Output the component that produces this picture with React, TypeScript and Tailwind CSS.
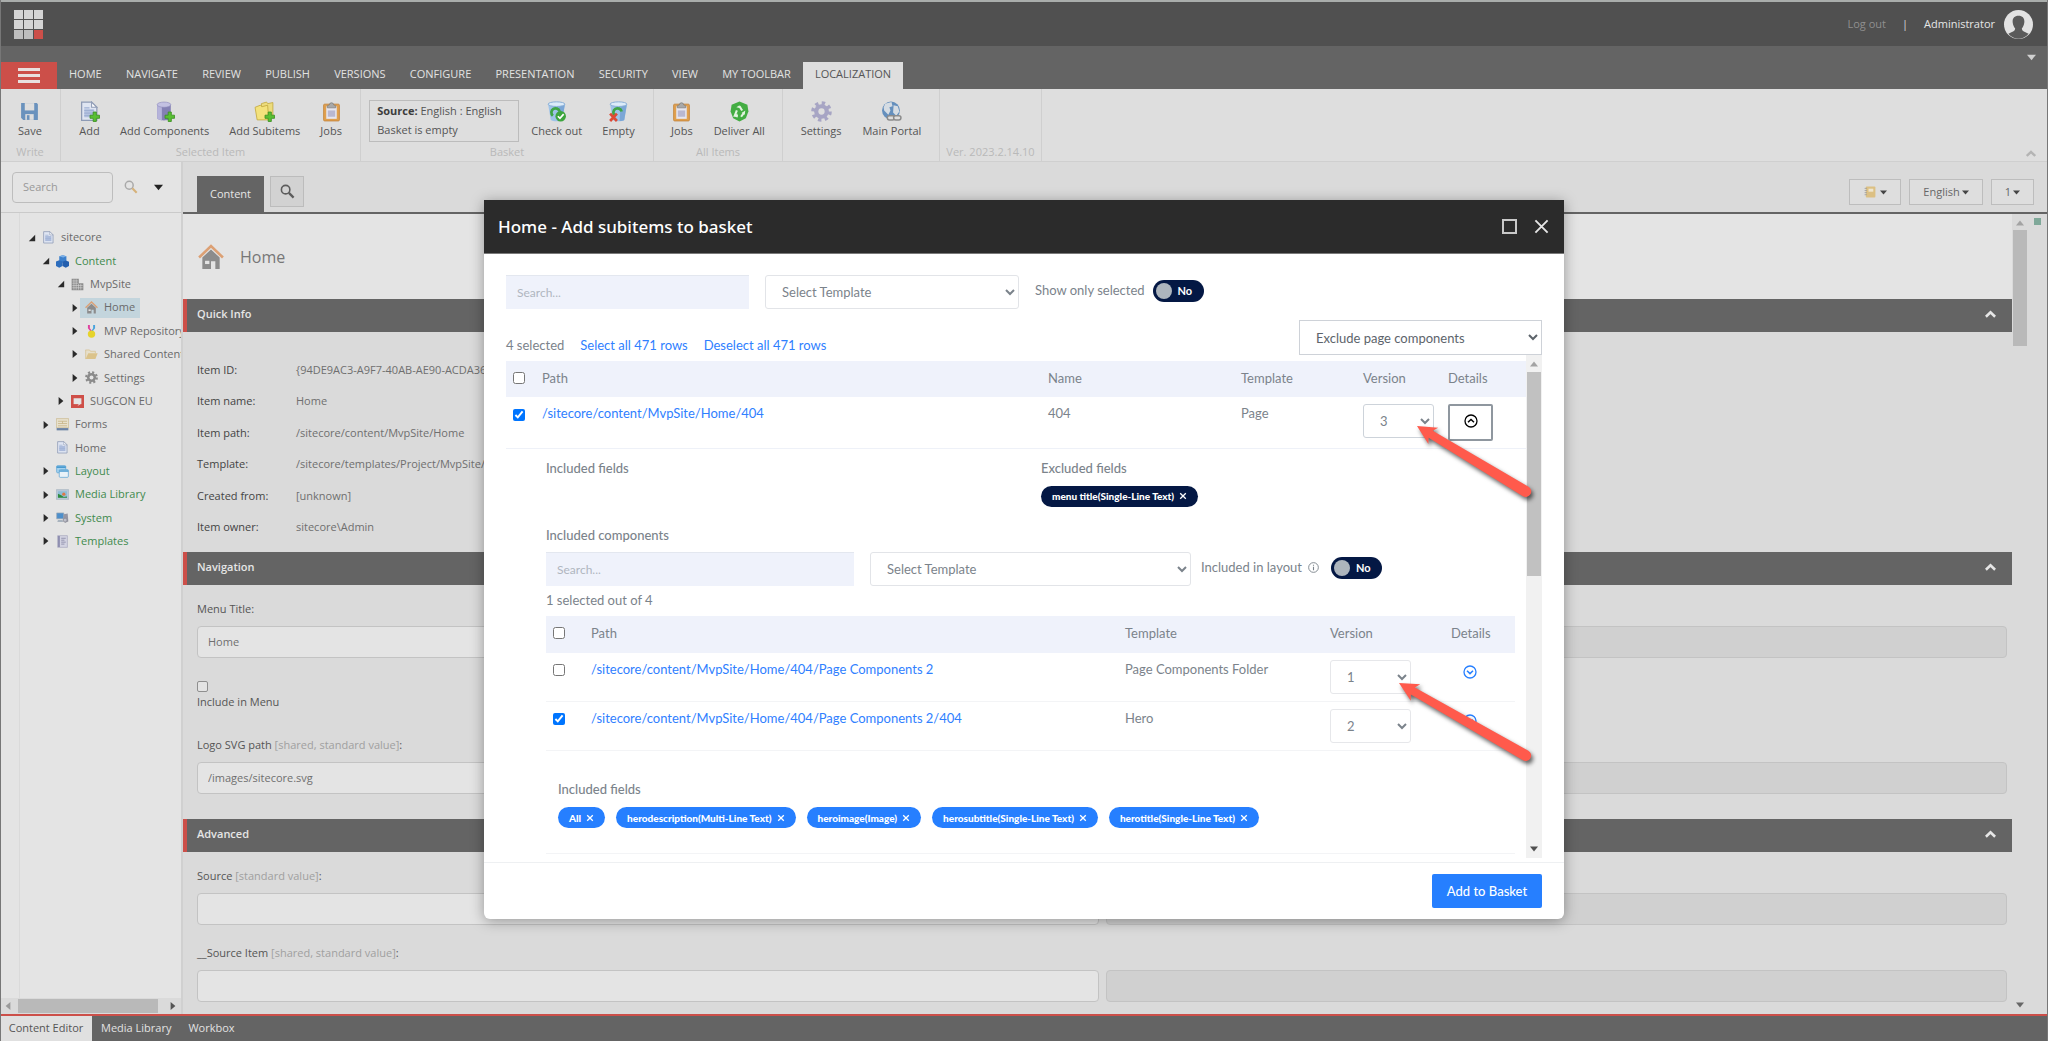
import React, { useState } from 'react';
import { clsx } from 'clsx';

type IconProps = { className?: string };

/* ---------- icons ---------- */

const Plus = () => (
  <path d="M13.5 10.5h3v3h3v3h-3v3h-3v-3h-3v-3h3z" fill="#58c032" stroke="#3c8f22" strokeWidth="0.8" />
);

const SaveIcon = ({ className }: IconProps) => (
  <svg viewBox="0 0 20 20" className={className}>
    <path d="M2 2h15l1 1v15H4l-2-2z" fill="#6a92bd" />
    <path d="M5.5 2h9v7h-9z" fill="#dedede" />
    <path d="M6 12.5h8V18H6z" fill="#dedede" />
    <path d="M7.5 13.5h2.5V18H7.5z" fill="#6a92bd" />
  </svg>
);

const DocIcon = ({ className, plus }: IconProps & { plus?: boolean }) => (
  <svg viewBox="0 0 20 20" className={className}>
    <path d="M2.5 1h9.5l5 5v12.5H2.5z" fill="#dfe5f2" stroke="#8e9bb5" strokeWidth="1.2" />
    <path d="M12 1v5h5z" fill="#fff" stroke="#8e9bb5" />
    <path d="M5 8h9.5v7.5H5z" fill="#b4c2e0" />
    <path d="M5 6.5h5M5 9h9M5 11.5h9M5 14h9" stroke="#9fb0d3" strokeWidth="1.2" />
    {plus && <Plus />}
  </svg>
);

const DatabaseIcon = ({ className }: IconProps) => (
  <svg viewBox="0 0 20 20" className={className}>
    <path d="M3 3.5v12.5c0 3.3 13 3.3 13 0V3.5z" fill="#8481b4" />
    <path d="M3 3.5v12.5c0 1.3 2 2.2 4.5 2.4V5z" fill="#b5b3da" />
    <ellipse cx="9.5" cy="3.5" rx="6.5" ry="2.5" fill="#c3c1e2" stroke="#8f8cbc" strokeWidth="0.6" />
    <Plus />
  </svg>
);

const FoldersIcon = ({ className }: IconProps) => (
  <svg viewBox="0 0 20 20" className={className}>
    <path d="M7 2.5l5-1.5 1 1.5 5-1v13H8z" fill="#ecdc7c" stroke="#c3a93f" strokeWidth="0.8" />
    <path d="M1 6l5-2 1.5 1.5L13 4l1 14H3z" fill="#f3e27c" stroke="#c3a93f" strokeWidth="0.8" />
    <Plus />
  </svg>
);

const ClipboardIcon = ({ className }: IconProps) => (
  <svg viewBox="0 0 20 20" className={className}>
    <rect x="2.5" y="3" width="15" height="16" rx="1" fill="#e0a04f" stroke="#c4833a" strokeWidth="0.8" />
    <path d="M5 5h10v12H5z" fill="#e6e6f0" />
    <path d="M6.5 9h7v6h-7z" fill="#b9b8d2" />
    <path d="M6 6.5V4.5l2-.8a2 2 0 0 1 4 0l2 .8v2z" fill="#a9a9a9" stroke="#7f7f7f" strokeWidth="0.7" />
  </svg>
);

const BinIcon = ({ className, mark }: IconProps & { mark: 'check' | 'cross' }) => (
  <svg viewBox="0 0 20 20" className={className}>
    <path d="M2 3l2.5 15c2 1.6 9 1.6 11 0L18 3z" fill="#9fc3e8" />
    <path d="M12 4l-1 15c2 0 4-.5 4.5-1L18 3z" fill="#7ba6d6" />
    <ellipse cx="10" cy="3" rx="8" ry="2.2" fill="#dcebf8" stroke="#86acd4" strokeWidth="0.9" />
    <path d="M6.5 14a4 4 0 1 1 6.5-4" fill="none" stroke="#3fa546" strokeWidth="2.6" />
    {mark === 'check' ? (
      <>
        <circle cx="14" cy="14.5" r="5" fill="#3da53d" />
        <path d="M11.3 14.5l2 2 3.5-4" fill="none" stroke="#fff" strokeWidth="1.6" />
      </>
    ) : (
      <path d="M2 12l6.5 7M8.5 12L2 19" stroke="#dd4a35" strokeWidth="2.6" />
    )}
  </svg>
);

const RecycleIcon = ({ className }: IconProps) => (
  <svg viewBox="0 0 20 20" className={className}>
    <path d="M10 .5l7.5 3 1 6.5-2.5 6.5-6 3-6-3L1.5 10l1-6.5z" fill="#43ad42" />
    <path d="M10 5l2.5 4M14 11.5L11.5 15M8.5 14h-3l2-5" fill="none" stroke="#e2f3df" strokeWidth="2" />
    <path d="M7 6l3-2 1 3zM15.5 9l-.5 4-3-1.5zM8 12v4l-3-2z" fill="#e2f3df" />
  </svg>
);

const GearIcon = ({ className, color, hole }: IconProps & { color: string; hole: string }) => (
  <svg viewBox="0 0 20 20" className={className}>
    <circle cx="10" cy="10" r="8" fill="none" stroke={color} strokeWidth="3.6" strokeDasharray="3.14 3.14" />
    <circle cx="10" cy="10" r="7" fill={color} />
    <circle cx="10" cy="10" r="3" fill={hole} />
  </svg>
);

const GlobeIcon = ({ className }: IconProps) => (
  <svg viewBox="0 0 20 20" className={className}>
    <circle cx="9.5" cy="9" r="8.5" fill="#648fbd" />
    <path d="M4 2.5l6-1.5 1 4-3 1 1 3-2 4-4-4-.5-3zM12 4l4 1 1.5 5-3 4-3-3z" fill="#d5dce3" />
    <rect x="6" y="14" width="7" height="4" rx="2" fill="#dedede" stroke="#8b8b8b" strokeWidth="1.4" />
    <rect x="12" y="14" width="7" height="4" rx="2" fill="#dedede" stroke="#8b8b8b" strokeWidth="1.4" />
  </svg>
);

const HouseIcon = ({ className }: IconProps) => (
  <svg viewBox="0 0 24 24" className={className}>
    <path d="M4 12.5L12 5l8 7.5V23h-4v-7h-4v7H4z" fill="#8c8c8c" />
    <path d="M6.5 15.5h4v3h-4z" fill="#e4e4e4" />
    <path d="M1 12.5L12 1.8l11 10.7" fill="none" stroke="#dca074" strokeWidth="2.4" />
  </svg>
);

const CubesIcon = ({ className }: IconProps) => (
  <svg viewBox="0 0 20 20" className={className}>
    <path d="M5 2l5.5-1.500L16 2v8l-5.500 2L5 10z" fill="#3d80cc" />
    <path d="M0 10l5-2 5 2v7l-5 2.500L0 17z" fill="#2c6dbd" />
    <path d="M10 10.500l5-2 5 2V17l-5 2.500-5-2.500z" fill="#245fae" />
    <path d="M5 2l5.500-1.500L16 2l-5 2z" fill="#7db1e8" />
  </svg>
);

const BuildingIcon = ({ className }: IconProps) => (
  <svg viewBox="0 0 20 20" className={className}>
    <path d="M1 1h11v7h7v11H1z" fill="#8b8b8b" />
    <path d="M2 4.5h9M2 8h9M2 11.5h16M2 15h16M4.5 2v16M8 2v16M11.5 9v9M15 9v9" stroke="#d9d9d9" strokeWidth="0.9" />
  </svg>
);

const MedalIcon = ({ className }: IconProps) => (
  <svg viewBox="0 0 20 20" className={className}>
    <path d="M4.5 0h3v5l3 4-2 1-4-5z" fill="#e0409f" />
    <path d="M12.5 0h3v5l-4 5-1.5-1 2.5-4z" fill="#4aa3dc" />
    <circle cx="10" cy="14" r="5.7" fill="#e6d32c" />
  </svg>
);

const FolderOpenIcon = ({ className }: IconProps) => (
  <svg viewBox="0 0 20 20" className={className}>
    <path d="M1 17V3h6l1.5 2H16v3" fill="#e6dfcb" stroke="#d3bd86" />
    <path d="M1 17L5 8h14.5L16 17z" fill="#dbc38b" />
  </svg>
);

const SlideIcon = ({ className }: IconProps) => (
  <svg viewBox="0 0 20 20" className={className}>
    <path d="M0 0h20v20H0z" fill="#cf4f48" />
    <rect x="4" y="5" width="12" height="9" fill="#e4e4e4" />
    <path d="M10 17l5-3h-3z" fill="#e4e4e4" />
  </svg>
);

const FormsIcon = ({ className }: IconProps) => (
  <svg viewBox="0 0 20 20" className={className}>
    <path d="M.5 1h19v14H.5z" fill="#e8e2cf" stroke="#c6b384" />
    <path d="M3 5h14M3 8.5h14M3 12h14M10 5v3.5" stroke="#c6b384" strokeWidth="1.2" />
    <path d="M1 15.5h18V19H1z" fill="#6c83a4" />
  </svg>
);

const WindowsIcon = ({ className }: IconProps) => (
  <svg viewBox="0 0 20 20" className={className}>
    <rect x="1" y="1" width="14" height="11" rx="1.5" fill="#a6d2ef" stroke="#4a9bd0" />
    <rect x="5" y="7" width="14" height="12" rx="1.5" fill="#e9f2f8" stroke="#4a9bd0" />
    <path d="M1 2h14v2.5H1zM5 8h14v2.5H5z" fill="#4a9bd0" />
  </svg>
);

const ImageIcon = ({ className }: IconProps) => (
  <svg viewBox="0 0 20 20" className={className}>
    <path d="M.5 2.5h19v15H.5z" fill="#b9c9da" stroke="#a6b1bd" />
    <path d="M3 5h14v10H3z" fill="#8fbdd6" />
    <path d="M3 15V9l5 2 4 3 5-1v2z" fill="#2f8b3e" />
    <circle cx="12" cy="9.5" r="2.5" fill="#de7847" />
  </svg>
);

const SystemIcon = ({ className }: IconProps) => (
  <svg viewBox="0 0 20 20" className={className}>
    <path d="M1 3h11v9H1z" fill="#4d8fcb" stroke="#9fa9b4" />
    <path d="M3 14h7l1 3H2z" fill="#a8b3be" />
    <path d="M12 5l6-1 1 12-5 2-3-3z" fill="#9696a3" />
    <circle cx="14" cy="14" r="3" fill="#bfc0cb" stroke="#85868f" />
  </svg>
);

const TemplateIcon = ({ className }: IconProps) => (
  <svg viewBox="0 0 20 20" className={className}>
    <path d="M2.5 1h15v18h-15z" fill="#d3d3e2" stroke="#a3a3bb" />
    <path d="M3 1.5h3v17H3z" fill="#8e8eb0" />
    <path d="M8 5h7M8 8h5M8 11h7M8 14h5" stroke="#8a8aa6" strokeWidth="1.3" />
  </svg>
);

const NotebookIcon = ({ className }: IconProps) => (
  <svg viewBox="0 0 20 20" className={className}>
    <rect x="3" y="1" width="16" height="18" rx="1.5" fill="#dcc083" />
    <path d="M7.5 4.5h8v5h-8z" fill="#efe6cf" />
    <path d="M1 4h4M1 7.5h4M1 11h4M1 14.5h4" stroke="#9c9c9c" strokeWidth="1.3" />
  </svg>
);

const LensIcon = ({ className, stroke, handle }: IconProps & { stroke: string; handle: string }) => (
  <svg viewBox="0 0 16 16" className={className} fill="none">
    <circle cx="6" cy="6" r="4.5" stroke={stroke} strokeWidth="1.7" />
    <path d="M9.5 9.5l5 5" stroke={handle} strokeWidth="2.4" />
  </svg>
);

const Triangle = ({ className, dir }: IconProps & { dir: 'up' | 'down' | 'left' | 'right' | 'corner' }) => {
  const paths = {
    up: 'M0 8h10L5 2z',
    down: 'M0 2h10L5 8z',
    left: 'M8 0v10L2 5z',
    right: 'M2 0v10l6-5z',
    corner: 'M9 1v8H1z',
  };
  return (
    <svg viewBox="0 0 10 10" className={className} fill="currentColor">
      <path d={paths[dir]} />
    </svg>
  );
};

const ChevronUp = ({ className }: IconProps) => (
  <svg viewBox="0 0 10 10" className={className} fill="none" stroke="currentColor" strokeWidth="2.4">
    <path d="M.8 7L5 3l4.2 4" />
  </svg>
);

const CircleChevron = ({ className, up }: IconProps & { up?: boolean }) => (
  <svg viewBox="0 0 14 14" className={className} fill="none" stroke="currentColor" strokeWidth="1.3">
    <circle cx="7" cy="7" r="6" />
    <path d={up ? 'M4 8.3l3-2.8 3 2.8' : 'M4 5.8l3 2.8 3-2.8'} strokeWidth="1.5" />
  </svg>
);

/* ---------- data ---------- */

const tabs = ['HOME', 'NAVIGATE', 'REVIEW', 'PUBLISH', 'VERSIONS', 'CONFIGURE', 'PRESENTATION', 'SECURITY', 'VIEW', 'MY TOOLBAR'];

const treeIcon = 'size-[13px] shrink-0';

const tree = [
  { label: 'sitecore', pad: 'pl-2', arrow: 'open', icon: <DocIcon className={treeIcon} /> },
  { label: 'Content', pad: 'pl-[22px]', arrow: 'open', green: true, icon: <CubesIcon className={treeIcon} /> },
  { label: 'MvpSite', pad: 'pl-[37px]', arrow: 'open', icon: <BuildingIcon className={treeIcon} /> },
  { label: 'Home', pad: 'pl-[51px]', arrow: 'closed', active: true, icon: <HouseIcon className={treeIcon} /> },
  { label: 'MVP Repository', pad: 'pl-[51px]', arrow: 'closed', icon: <MedalIcon className={treeIcon} /> },
  { label: 'Shared Content', pad: 'pl-[51px]', arrow: 'closed', icon: <FolderOpenIcon className={treeIcon} /> },
  { label: 'Settings', pad: 'pl-[51px]', arrow: 'closed', icon: <GearIcon className={treeIcon} color="#8a8a8a" hole="#e4e4e4" /> },
  { label: 'SUGCON EU', pad: 'pl-[37px]', arrow: 'closed', icon: <SlideIcon className={treeIcon} /> },
  { label: 'Forms', pad: 'pl-[22px]', arrow: 'closed', icon: <FormsIcon className={treeIcon} /> },
  { label: 'Home', pad: 'pl-[22px]', icon: <DocIcon className={treeIcon} /> },
  { label: 'Layout', pad: 'pl-[22px]', arrow: 'closed', green: true, icon: <WindowsIcon className={treeIcon} /> },
  { label: 'Media Library', pad: 'pl-[22px]', arrow: 'closed', green: true, icon: <ImageIcon className={treeIcon} /> },
  { label: 'System', pad: 'pl-[22px]', arrow: 'closed', green: true, icon: <SystemIcon className={treeIcon} /> },
  { label: 'Templates', pad: 'pl-[22px]', arrow: 'closed', green: true, icon: <TemplateIcon className={treeIcon} /> },
];

const quickInfo = [
  ['Item ID:', '{94DE9AC3-A9F7-40AB-AE90-ACDA364D0A2C}'],
  ['Item name:', 'Home'],
  ['Item path:', '/sitecore/content/MvpSite/Home'],
  ['Template:', '/sitecore/templates/Project/MvpSite/Home'],
  ['Created from:', '[unknown]'],
  ['Item owner:', 'sitecore\\Admin'],
];

const heroFields = ['All', 'herodescription(Multi-Line Text)', 'heroimage(Image)', 'herosubtitle(Single-Line Text)', 'herotitle(Single-Line Text)'];

/* ---------- editor shell ---------- */

const TopBar = () => (
  <header className="flex h-[46px] shrink-0 items-center border-t-2 border-[#a9adab] bg-[#505050] pr-[15px] pl-[14px] text-[11px]">
    <div className="grid grid-cols-3 gap-px">
      {Array.from({ length: 9 }, (_, i) => (
        <span key={i} className={clsx('h-[9px] w-[9px]', i === 8 ? 'bg-[#cc4f49]' : i > 5 ? 'bg-[#bdbdbd]' : 'bg-[#d4d4d4]')} />
      ))}
    </div>
    <a href="#" className="ml-auto text-[#8f8f8f]">Log out</a>
    <span className="mx-4 text-[#d8d8d8]">|</span>
    <span className="mr-[9px] font-medium text-[#e6e6e6]">Administrator</span>
    <svg viewBox="0 0 30 30" className="size-[29px]">
      <circle cx="15" cy="15" r="15" fill="#e2e2e2" />
      <path d="M15 6c4.5 0 6.5 3 6 7-.3 3-1.5 5-2.5 6 0 3 2 3.5 7 5.5-6 7-15 7-21 0 5-2 7-2.5 7-5.5-1-1-2.2-3-2.5-6-.5-4 1.5-7 6-7z" fill="#5a5a5a" />
    </svg>
  </header>
);

const TabBar = () => (
  <nav className="flex h-[43px] shrink-0 items-end bg-[#646464] pr-3 text-[11px] text-[#e2e2e2]">
    <button aria-label="Menu" className="flex h-[27px] w-[57px] flex-col items-center justify-center gap-[3px] bg-[#cc4f49]">
      <span className="h-[3px] w-[22px] bg-[#e9e0df]" />
      <span className="h-[3px] w-[22px] bg-[#e9e0df]" />
      <span className="h-[3px] w-[22px] bg-[#e9e0df]" />
    </button>
    <div className="flex w-[746px] justify-between">
      {tabs.map((t) => (
        <button key={t} className="h-[27px] px-3 pb-[2px]">{t}</button>
      ))}
    </div>
    <button className="h-[27px] w-[100px] bg-[#dedede] pb-[2px] text-[#555]">LOCALIZATION</button>
    <Triangle dir="down" className="mb-[27px] ml-auto size-[9px] text-[#d0d0d0]" />
  </nav>
);

const RibbonButton = ({ icon, label }: { icon: React.ReactNode; label: string }) => (
  <button className="flex flex-col items-center gap-px leading-4">
    {icon}
    {label}
  </button>
);

const RibbonGroup = ({ name, width, gap, children }: { name?: string; width: string; gap: string; children?: React.ReactNode }) => (
  <section className={clsx('flex shrink-0 flex-col border-r border-[#cfcfcf]', width)}>
    <div className={clsx('flex h-[55px] justify-center pt-3', gap)}>{children}</div>
    <div className="h-4 text-center leading-4 text-[#b9b9b9]">{name}</div>
  </section>
);

const ri = 'size-[21px]';

const Ribbon = () => (
  <div className="flex h-[73px] shrink-0 border-b border-[#cfcfcf] bg-[#dedede] text-[11px] text-[#555]">
    <RibbonGroup name="Write" width="w-[61px]" gap="gap-6">
      <RibbonButton label="Save" icon={<SaveIcon className={ri} />} />
    </RibbonGroup>
    <RibbonGroup name="Selected Item" width="w-[300px]" gap="gap-5">
      <RibbonButton label="Add" icon={<DocIcon plus className={ri} />} />
      <RibbonButton label="Add Components" icon={<DatabaseIcon className={ri} />} />
      <RibbonButton label="Add Subitems" icon={<FoldersIcon className={ri} />} />
      <RibbonButton label="Jobs" icon={<ClipboardIcon className={ri} />} />
    </RibbonGroup>
    <RibbonGroup name="Basket" width="w-[293px]" gap="gap-5 pr-[10px]">
      <div className="-mt-px -mr-2 h-[42px] w-[150px] border border-[#bcbcbc] px-[7px] leading-[19px]">
        <p><b className="text-[#3d3d3d]">Source:</b> English : English</p>
        <p>Basket is empty</p>
      </div>
      <RibbonButton label="Check out" icon={<BinIcon mark="check" className={ri} />} />
      <RibbonButton label="Empty" icon={<BinIcon mark="cross" className={ri} />} />
    </RibbonGroup>
    <RibbonGroup name="All Items" width="w-[129px]" gap="gap-[21px]">
      <RibbonButton label="Jobs" icon={<ClipboardIcon className={ri} />} />
      <RibbonButton label="Deliver All" icon={<RecycleIcon className={ri} />} />
    </RibbonGroup>
    <RibbonGroup width="w-[157px]" gap="gap-[21px]">
      <RibbonButton label="Settings" icon={<GearIcon className={ri} color="#a7a5c4" hole="#dedede" />} />
      <RibbonButton label="Main Portal" icon={<GlobeIcon className={ri} />} />
    </RibbonGroup>
    <RibbonGroup name="Ver. 2023.2.14.10" width="w-[102px]" gap="gap-0" />
    <ChevronUp className="mr-3 mb-[2px] ml-auto size-[10px] self-end text-[#b4b4b4]" />
  </div>
);

const Sidebar = () => (
  <aside className="flex w-[183px] shrink-0 flex-col border-r-2 border-[#d0d0d0] bg-[#e4e4e4]">
    <div className="flex h-[51px] shrink-0 items-center border-b border-[#cacaca] pl-3">
      <input aria-label="Search" placeholder="Search" className="h-[31px] w-[101px] rounded-sm border border-[#bdbdbd] px-[10px] pb-[2px] text-[11px] placeholder:text-[#999]" />
      <LensIcon className="ml-[11px] size-[14px]" stroke="#a9a9a9" handle="#d6b27a" />
      <Triangle dir="down" className="ml-4 size-[9px] text-[#222]" />
    </div>
    <div className="flex min-h-0 flex-1">
      <div className="w-5 shrink-0 border-r border-[#dadada]" />
      <div className="min-w-0 flex-1 overflow-hidden pt-[13px]">
        <ul className="grid h-[327px] auto-rows-fr text-[11px] text-[#6a6a6a]">
          {tree.map((n, i) => (
            <li key={i} className={clsx('flex items-center whitespace-nowrap', n.pad)}>
              <span className="w-[9px] shrink-0 text-[#2a2a2a]">
                {n.arrow && <Triangle dir={n.arrow === 'open' ? 'corner' : 'right'} className="size-[8px]" />}
              </span>
              <span className={clsx('flex h-5 items-center gap-[6px] px-[5px]', n.active && 'bg-[#c3d5dd]', n.green && 'text-[#3f8a4d]')}>
                {n.icon}
                {n.label}
              </span>
            </li>
          ))}
        </ul>
      </div>
    </div>
    <div className="flex h-4 shrink-0 items-center bg-[#dadada] pr-1 pl-1">
      <Triangle dir="left" className="size-2 text-[#9a9a9a]" />
      <span className="ml-[6px] h-[14px] w-[140px] bg-[#b9b9b9]" />
      <Triangle dir="right" className="ml-[11px] size-2 text-[#555]" />
    </div>
  </aside>
);

const SectionHeader = ({ title }: { title: string }) => (
  <h2 className="flex h-[33px] items-center justify-between border-l-4 border-[#cc4f49] bg-[#646464] pr-4 pb-[2px] pl-[10px] text-[11px] font-semibold text-[#e6e6e6]">
    {title}
    <ChevronUp className="size-[11px]" />
  </h2>
);

const FieldPair = ({ id, value }: { id: string; value?: string }) => (
  <div className="mt-[7px] flex gap-[7px]">
    <input id={id} defaultValue={value} className="h-8 min-w-0 flex-1 rounded-sm border border-[#c3c3c3] bg-[#e4e4e4] px-[10px] pb-[2px] text-[#6f6f6f]" />
    <input aria-label={`${id} comparison`} disabled className="h-8 min-w-0 flex-1 rounded-sm border border-[#c3c3c3] bg-[#d0d0d0] px-[10px]" />
  </div>
);

const FieldLabel = ({ id, label, hint }: { id: string; label: string; hint?: string }) => (
  <label htmlFor={id} className="block leading-5 text-[#555]">
    {label}
    {hint && <span className="text-[#a0a0a0]"> [{hint}]</span>}
    {hint && ':'}
  </label>
);

const Editor = () => (
  <main className="flex min-w-0 flex-1 flex-col bg-[#dadada] text-[11px]">
    <div className="flex h-[52px] shrink-0 items-end border-b-2 border-[#646464] pr-[14px] pl-[14px]">
      <button className="h-9 w-[67px] bg-[#646464] text-[#e6e6e6]">Content</button>
      <button aria-label="Find" className="mb-[5px] ml-[6px] flex h-[31px] w-[34px] items-center justify-center border border-[#bcbcbc] bg-[#d2d2d2]">
        <LensIcon className="size-[15px]" stroke="#5c5c5c" handle="#5c5c5c" />
      </button>
      <div className="mb-[7px] ml-auto flex gap-2 text-[#666]">
        <button aria-label="Notes" className="flex h-[26px] w-[52px] items-center justify-center gap-1 border border-[#bdbdbd] bg-[#dedede]">
          <NotebookIcon className="size-3" />
          <Triangle dir="down" className="size-[7px] text-[#444]" />
        </button>
        <button className="flex h-[26px] w-[74px] items-center justify-center gap-[2px] border border-[#bdbdbd] bg-[#dedede]">
          English
          <Triangle dir="down" className="size-[7px] text-[#444]" />
        </button>
        <button className="flex h-[26px] w-[43px] items-center justify-center gap-[2px] border border-[#bdbdbd] bg-[#dedede]">
          1
          <Triangle dir="down" className="size-[7px] text-[#444]" />
        </button>
      </div>
    </div>
    <div className="flex min-h-0 flex-1">
      <div className="min-w-0 flex-1 overflow-hidden">
        <div className="flex h-[85px] items-center gap-4 bg-[#e4e4e4] pl-[15px] text-base text-[#777]">
          <HouseIcon className="size-[26px]" />
          <h1>Home</h1>
        </div>

        <SectionHeader title="Quick Info" />
        <dl className="grid h-[220px] auto-rows-fr pt-[22px] pb-[9px] pl-[14px]">
          {quickInfo.map(([k, v]) => (
            <div key={k} className="flex items-center">
              <dt className="w-[99px] font-medium text-[#444]">{k}</dt>
              <dd className="text-[#6f6f6f]">{v}</dd>
            </div>
          ))}
        </dl>

        <SectionHeader title="Navigation" />
        <div className="h-[234px] pt-[14px] pr-[5px] pl-[14px]">
          <FieldLabel id="menu-title" label="Menu Title:" />
          <FieldPair id="menu-title" value="Home" />
          <div className="mt-[23px] flex flex-col items-start">
            <input id="include-in-menu" type="checkbox" className="size-[11px] appearance-none rounded-xs border border-[#8f8f8f] bg-[#e4e4e4]" />
            <FieldLabel id="include-in-menu" label="Include in Menu" />
          </div>
          <div className="mt-[23px]">
            <FieldLabel id="logo-path" label="Logo SVG path" hint="shared, standard value" />
            <FieldPair id="logo-path" value="/images/sitecore.svg" />
          </div>
        </div>

        <SectionHeader title="Advanced" />
        <div className="pt-[14px] pr-[5px] pl-[14px]">
          <FieldLabel id="source" label="Source" hint="standard value" />
          <FieldPair id="source" />
          <div className="mt-[18px]">
            <FieldLabel id="source-item" label="__Source Item" hint="shared, standard value" />
            <FieldPair id="source-item" />
          </div>
        </div>
      </div>
      <div className="flex w-4 shrink-0 flex-col items-center justify-between py-[5px] text-[#a3a3a3]">
        <div className="flex flex-col items-center">
          <Triangle dir="up" className="size-2" />
          <span className="mt-[3px] h-[116px] w-[14px] bg-[#b9b9b9]" />
        </div>
        <Triangle dir="down" className="size-2 text-[#666]" />
      </div>
      <div className="w-5 shrink-0 pt-1 pl-[6px]">
        <div className="size-[7px] bg-[#7fa899]" />
      </div>
    </div>
  </main>
);

const StatusBar = () => (
  <footer className="flex h-[27px] shrink-0 border-t-2 border-[#cc4f49] bg-[#646464] text-[11px] font-medium text-[#e2e2e2]">
    <button className="w-[92px] bg-[#e0e0e0] font-normal text-[#555]">Content Editor</button>
    <button className="ml-[9px]">Media Library</button>
    <button className="ml-[17px]">Workbox</button>
  </footer>
);

/* ---------- dialog ---------- */

const selectBase = 'h-[34px] rounded-[3px] border bg-white pr-[2px] pl-3 text-[13px]';

const Toggle = ({ label }: { label: string }) => {
  const [on, setOn] = useState(false);
  return (
    <button
      role="switch"
      aria-checked={on}
      aria-label={label}
      onClick={() => setOn(!on)}
      className="flex h-[22px] w-[51px] items-center gap-[6px] rounded-full bg-[#041844] pl-[3px] text-[11px] font-bold text-white"
    >
      <span className="size-4 rounded-full bg-[#adb5bd]" />
      {on ? 'Yes' : 'No'}
    </button>
  );
};

const Pill = ({ text, dark }: { text: string; dark?: boolean }) => (
  <span className={clsx('flex h-[21px] w-max items-center gap-[5px] rounded-full px-[11px] text-[10px] font-black text-white', dark ? 'bg-[#041844]' : 'bg-[#267fff]')}>
    {text}
    <button aria-label={`Remove ${text}`}>
      <svg viewBox="0 0 8 8" className="size-2" stroke="currentColor" strokeWidth="1.3">
        <path d="M1.2 1.2l5.6 5.6M6.8 1.2L1.2 6.8" />
      </svg>
    </button>
  </span>
);

const ComponentRow = ({ path, template, version, checked }: { path: string; template: string; version: string; checked?: boolean }) => (
  <tr className="h-[49px] border-b border-[#f3f4f6] align-top">
    <td className="pt-[11px] pl-[7px]">
      <input type="checkbox" aria-label={path} defaultChecked={checked} className="block size-3" />
    </td>
    <td className="pt-[6px]"><a href="#" className="text-[#2f80ff]">{path}</a></td>
    <td className="pt-[6px]">{template}</td>
    <td className="pt-[7px]">
      <select aria-label={`Version of ${path}`} defaultValue={version} className={clsx(selectBase, 'w-[81px] border-[#e6e7ea] text-[#7b838b]')}>
        <option>1</option>
        <option>2</option>
      </select>
    </td>
    <td className="pt-3 pl-3">
      <button aria-label="Show details" className="block text-[#267fff]"><CircleChevron className="size-[14px]" /></button>
    </td>
  </tr>
);

const ItemDetails = () => (
  <div className="pt-[9px] pr-[11px] pb-1 pl-10">
    <div className="flex">
      <p className="w-[495px] font-medium">Included fields</p>
      <div>
        <p className="mb-2 font-medium">Excluded fields</p>
        <Pill dark text="menu title(Single-Line Text)" />
      </div>
    </div>
    <p className="mt-[18px] font-medium">Included components</p>
    <div className="mt-[7px] flex">
      <input aria-label="Search components" placeholder="Search..." className="h-[34px] w-[308px] border-t border-[#e3e7ef] bg-[#eff2fb] px-[11px] text-[12px] placeholder:text-[#b0b6bf]" />
      <select aria-label="Component template" className={clsx(selectBase, 'ml-4 w-[321px] border-[#e2e4e8]')}>
        <option>Select Template</option>
      </select>
      <span className="mt-[5px] ml-[10px]">Included in layout</span>
      <svg viewBox="0 0 12 12" className="mt-[10px] ml-[6px] size-[11px]" fill="none" stroke="currentColor">
        <circle cx="6" cy="6" r="5.3" />
        <path d="M6 5.2V9M6 3v1.2" strokeWidth="1.2" />
      </svg>
      <div className="mt-[5px] ml-3"><Toggle label="Included in layout" /></div>
    </div>
    <p className="mt-1">1 selected out of 4</p>
    <table className="mt-[6px] w-full table-fixed border-collapse text-left">
      <colgroup>
        <col className="w-[45px]" />
        <col />
        <col className="w-[205px]" />
        <col className="w-[121px]" />
        <col className="w-16" />
      </colgroup>
      <thead>
        <tr className="h-[37px] bg-[#eff2fb] [&>th]:pb-[2px] [&>th]:font-normal">
          <th className="pl-[7px]"><input type="checkbox" aria-label="Select all components" className="block size-3" /></th>
          <th>Path</th>
          <th>Template</th>
          <th>Version</th>
          <th>Details</th>
        </tr>
      </thead>
      <tbody>
        <ComponentRow path="/sitecore/content/MvpSite/Home/404/Page Components 2" template="Page Components Folder" version="1" />
        <ComponentRow path="/sitecore/content/MvpSite/Home/404/Page Components 2/404" template="Hero" version="2" checked />
      </tbody>
    </table>
    <div className="h-[103px] border-b border-[#f3f4f6] pt-[28px] pl-3">
      <p className="font-medium">Included fields</p>
      <div className="mt-2 flex gap-[11px]">
        {heroFields.map((f) => <Pill key={f} text={f} />)}
      </div>
    </div>
  </div>
);

const SubitemsTable = () => (
  <table className="w-full table-fixed border-collapse text-left">
    <colgroup>
      <col className="w-9" />
      <col />
      <col className="w-[193px]" />
      <col className="w-[122px]" />
      <col className="w-[85px]" />
      <col className="w-[78px]" />
    </colgroup>
    <thead>
      <tr className="h-9 bg-[#eff2fb] [&>th]:pb-[2px] [&>th]:font-normal">
        <th className="pl-[7px]"><input type="checkbox" aria-label="Select all" className="block size-3" /></th>
        <th>Path</th>
        <th>Name</th>
        <th>Template</th>
        <th>Version</th>
        <th>Details</th>
      </tr>
    </thead>
    <tbody>
      <tr className="h-[51px] border-b border-[#eef1f8] align-top">
        <td className="pt-3 pl-[7px]">
          <input type="checkbox" aria-label="/sitecore/content/MvpSite/Home/404" defaultChecked className="block size-3" />
        </td>
        <td className="pt-[6px]"><a href="#" className="text-[#2f80ff]">/sitecore/content/MvpSite/Home/404</a></td>
        <td className="pt-[6px]">404</td>
        <td className="pt-[6px]">Page</td>
        <td className="pt-[7px]">
          <select aria-label="Version" defaultValue="3" className={clsx(selectBase, 'w-[71px] border-[#cdd3da] text-[#7b838b]')}>
            <option>3</option>
          </select>
        </td>
        <td className="pt-[7px]">
          <button aria-label="Hide details" className="flex h-[37px] w-[45px] items-center justify-center rounded-xs border-2 border-[#8f979f] pb-1 text-black">
            <CircleChevron up className="size-[14px]" />
          </button>
        </td>
      </tr>
      <tr>
        <td colSpan={6} className="p-0"><ItemDetails /></td>
      </tr>
    </tbody>
  </table>
);

const Pointer = ({ className, end }: { className: string; end: [number, number] }) => {
  const len = Math.hypot(end[0], end[1]);
  const deg = (Math.atan2(end[1], end[0]) * 180) / Math.PI;
  return (
    <svg viewBox="-4 -8 140 100" className={clsx('pointer-events-none absolute h-[100px] w-[140px] overflow-visible drop-shadow-[2px_3px_2px_rgba(0,0,0,0.6)]', className)}>
      <g transform={`rotate(${deg})`} fill="#ff5a4c">
        <path d={`M0 0L19 -9.5L16 -4L${len - 5} -5.5a5.5 5.5 0 0 1 0 11L16 4L19 9.5z`} />
      </g>
    </svg>
  );
};

const BasketDialog = () => (
  <div role="dialog" aria-label="Home - Add subitems to basket" className="relative w-full max-w-[1080px] rounded-b-md bg-white font-['Lato',sans-serif] text-[13px] leading-5 text-[#7b838b] shadow-[0_2px_14px_rgba(0,0,0,0.35)]">
    <div className="flex h-[54px] items-center border-b border-[#7a7a7a] bg-[#2b2b2b] pr-[15px] pl-[14px] font-['Noto_Sans',sans-serif] text-[17px] font-medium text-white">
      <h2>Home - Add subitems to basket</h2>
      <button aria-label="Maximize" className="ml-auto size-[15px] border-2 border-[#c9c9c9]" />
      <button aria-label="Close" className="ml-[17px]">
        <svg viewBox="0 0 16 16" className="size-[15px]" stroke="#e6e6e6" strokeWidth="2">
          <path d="M1.5 1.5l13 13M14.5 1.5l-13 13" />
        </svg>
      </button>
    </div>

    <div className="px-[22px] pt-[21px]">
      <div className="flex">
        <input aria-label="Search" placeholder="Search..." className="h-[34px] w-[243px] border-t border-[#e3e7ef] bg-[#eff2fb] px-[11px] text-[12px] placeholder:text-[#b0b6bf]" />
        <select aria-label="Template" className={clsx(selectBase, 'ml-4 w-[254px] border-[#e2e4e8]')}>
          <option>Select Template</option>
        </select>
        <span className="mt-[5px] ml-4">Show only selected</span>
        <div className="mt-[5px] ml-2"><Toggle label="Show only selected" /></div>
      </div>
      <div className="mt-[11px] flex items-end">
        <div className="flex h-5 gap-4">
          <span>4 selected</span>
          <button className="text-[#2f80ff]">Select all 471 rows</button>
          <button className="text-[#2f80ff]">Deselect all 471 rows</button>
        </div>
        <select aria-label="Page components" className="ml-auto h-[35px] w-[243px] border border-[#ced2d8] bg-white pr-[2px] pl-3 text-[13px] text-[#5d646b]">
          <option>Exclude page components</option>
        </select>
      </div>
      <div className="flex">
        <div className="min-w-0 flex-1 pt-[6px]"><SubitemsTable /></div>
        <div className="flex w-4 shrink-0 flex-col items-center justify-between bg-[#f1f1f1] pt-[5px] pb-[5px]">
          <div className="flex flex-col items-center">
            <Triangle dir="up" className="size-2 text-[#a3a3a3]" />
            <span className="mt-1 h-[204px] w-[14px] bg-[#c1c1c1]" />
          </div>
          <Triangle dir="down" className="size-2 text-[#505050]" />
        </div>
      </div>
    </div>

    <div className="mt-1 flex justify-end border-t border-[#eef0f2] px-[22px] pt-[11px] pb-[11px]">
      <button className="h-[34px] w-[110px] rounded-xs bg-[#267fff] font-medium text-white">Add to Basket</button>
    </div>

    <Pointer className="top-[218px] left-[929px]" end={[113, 68]} />
    <Pointer className="top-[475px] left-[911px]" end={[131, 75]} />
  </div>
);

export default function App() {
  return (
    <div className="relative flex h-screen flex-col overflow-hidden bg-[#dadada] font-['Open_Sans',sans-serif] after:pointer-events-none after:absolute after:inset-0 after:border-x after:border-[#777]">
      <TopBar />
      <TabBar />
      <Ribbon />
      <div className="flex min-h-0 flex-1">
        <Sidebar />
        <Editor />
      </div>
      <StatusBar />
      <div className="absolute inset-0 flex items-start justify-center pt-[200px]">
        <BasketDialog />
      </div>
    </div>
  );
}
